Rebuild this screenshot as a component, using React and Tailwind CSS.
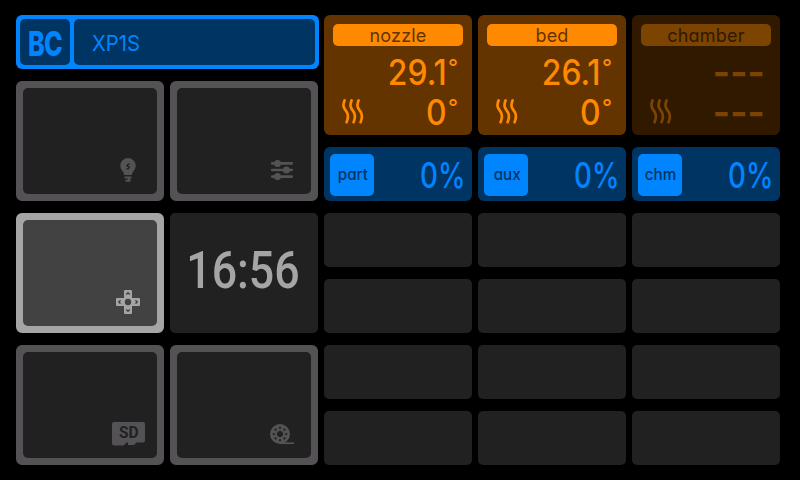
import React from "react";

function BulbIcon() {
  return (
    <svg width="34" height="24" viewBox="0 0 34 24" fill="#545254">
      <path d="M17 0a7.7 7.7 0 0 0-7.7 7.7c0 3 1.6 4.4 2.8 6.2.7 1 .9 1.900 1.100 3.100h7.600c.2-1.200.4-2.100 1.100-3.100 1.200-1.800 2.800-3.200 2.800-6.200A7.700 7.700 0 0 0 17 0z" />
      <path d="M13.500 18.600h7v1.800h-2v1h2l-1.400 2.100-2.100.5-2.100-.5-1.300-1.500h3v-1.400h-3z" />
      <path d="M18.600 5.800l-1.600.6-1 1.400 2.200 1.300-.8 1.500-1.800.2" fill="none" stroke="#212121" strokeWidth="1.400" />
    </svg>
  );
}

function SlidersIcon() {
  return (
    <svg width="34" height="24" viewBox="0 0 34 24" fill="#545254" stroke="#545254" strokeWidth="2.700" strokeLinecap="round">
      <path d="M7.200 5.400h19.600M7.200 12h19.600M7.200 18.600h19.600" />
      <g stroke="none">
        <circle cx="12.500" cy="5.400" r="3.500" />
        <circle cx="21.500" cy="12" r="3.500" />
        <circle cx="12.500" cy="18.600" r="3.500" />
      </g>
    </svg>
  );
}

function PadIcon() {
  return (
    <svg width="34" height="24" viewBox="0 0 34 24">
      <path d="M14 0h6a1 1 0 0 1 1 1v7h7a1 1 0 0 1 1 1v6a1 1 0 0 1-1 1h-7v7a1 1 0 0 1-1 1h-6a1 1 0 0 1-1-1v-7H6a1 1 0 0 1-1-1V9a1 1 0 0 1 1-1h7V1a1 1 0 0 1 1-1z" fill="#a5a5a5" />
      <circle cx="17" cy="12" r="3.200" fill="#424242" />
      <path d="M15.200 4.500L17 2.800l1.800 1.700M15.200 19.500l1.800 1.700 1.800-1.700M9.500 10.200L7.800 12l1.700 1.800M24.500 10.200l1.700 1.800-1.700 1.800" fill="none" stroke="#424242" strokeWidth="1.400" />
    </svg>
  );
}

function SdIcon() {
  return (
    <svg width="34" height="24" viewBox="0 0 34 24">
      <path d="M3 0h29a2 2 0 0 1 2 2v16.500a2 2 0 0 1-2 2h-6.500L23 23h-6v-2.400h-1.500L12.500 23.600H3a2 2 0 0 1-2-2V2a2 2 0 0 1 2-2z" fill="#545254" />
      <text x="8" y="16" fontFamily="Roboto, sans-serif" fontWeight="700" fontSize="16" textLength="19.500" lengthAdjust="spacingAndGlyphs" fill="#212121">SD</text>
    </svg>
  );
}

function SpoolIcon() {
  return (
    <svg width="34" height="24" viewBox="0 0 34 24">
      <circle cx="15" cy="12" r="10" fill="#545254" />
      <path d="M15 21.200h14" stroke="#545254" strokeWidth="1.700" />
      <circle cx="15" cy="12" r="3" fill="#212121" />
      <g fill="#212121">
        {[0, 45, 90, 135, 180, 225, 270, 315].map((a) => (
          <circle key={a} cx="15" cy="5.800" r="1.100" transform={`rotate(${a} 15 12)`} />
        ))}
      </g>
    </svg>
  );
}

function HeatIcon() {
  return (
    <svg width="22" height="25" viewBox="0 0 22 25" fill="none" stroke="currentColor" strokeWidth="2.700" strokeLinecap="round">
      <path d="M2.600 1.400C-.4 8 3.300 10.500 5 13.500c1.400 3 1.200 6-.4 9.700" />
      <path d="M9.600 1.400C6.600 8 10.300 10.500 12 13.500c1.400 3 1.200 6-.4 9.700" />
      <path d="M16.600 1.400C13.600 8 17.300 10.500 19 13.500c1.400 3 1.200 6-.4 9.700" />
    </svg>
  );
}

function Tile({ active, children }) {
  return (
    <div className={`row-span-2 flex items-end justify-end rounded-md border-[7px] ${active ? "border-[#a5a5a5] bg-[#a5a5a5]" : "border-[#545254] bg-[#545254]"}`}>
      <div className={`flex h-full w-full items-end justify-end rounded-[5px] p-3 ${active ? "bg-[#424242]" : "bg-[#212121]"}`}>{children}</div>
    </div>
  );
}

function Reading({ value }) {
  if (value === null) {
    return (
      <div className="flex h-10 items-center justify-end pr-[15px]">
        <span className="origin-right scale-x-[1.110] text-[33px] font-extrabold leading-10">---</span>
      </div>
    );
  }
  return (
    <div className="flex h-10 items-start justify-end pr-[14px]">
      <span className="origin-right scale-x-[0.910] text-[35px] font-medium leading-10">{value}</span>
      <span className="-mt-[3px] w-[11px] pl-px text-[22px] font-medium leading-9">°</span>
    </div>
  );
}

function Heater({ name, now, target, off }) {
  return (
    <div className={`row-span-2 rounded-md pt-[9px] ${off ? "bg-[#311900] text-[#7b4400]" : "bg-[#633400] text-[#ff8900]"}`}>
      <div className={`mx-[9px] flex h-[22px] items-center justify-center rounded-[5px] ${off ? "bg-[#7b4400] text-[#311900]" : "bg-[#ff8900] text-[#633400]"}`}>
        <span className="mt-[2px] text-[18px] leading-[22px] tracking-[0.200px]">{name}</span>
      </div>
      <div className="pt-[6px]">
        <Reading value={now} />
      </div>
      <div className="flex justify-between pl-[18px]">
        <div className="pt-[7px]">
          <HeatIcon />
        </div>
        <Reading value={target} />
      </div>
    </div>
  );
}

function Fan({ name }) {
  return (
    <div className="flex items-center justify-between rounded-md bg-[#003463] pl-[6px] pr-[7px] text-[#0085ff]">
      <div className="mt-[2px] flex h-[42px] w-11 items-center justify-center rounded-[5px] bg-[#0085ff] text-[#003463]">
        <span className="-mt-[2px] ml-[2px] scale-x-[0.950] text-[16px] font-medium leading-5">{name}</span>
      </div>
      <span className="mt-px origin-right scale-x-[0.790] text-[35px] font-medium leading-10">0%</span>
    </div>
  );
}

export default function App() {
  return (
    <div className="h-[480px] w-[800px] overflow-hidden bg-black pl-4 pt-[15px] font-[Inter,sans-serif] [font-feature-settings:'cv11']">
      <div className="grid w-[764px] grid-flow-col grid-cols-5 grid-rows-[repeat(7,54px)] gap-x-[6px] gap-y-3">
        <div className="col-span-2 col-start-1 row-start-1 -mr-px flex gap-1 rounded-md bg-[#0085ff] p-1 text-[#0085ff]">
          <div className="flex w-[50px] items-center justify-center rounded-[5px] bg-[#003463]">
            <span className="mt-[3px] scale-x-[0.740] text-[34px] font-extrabold leading-10 tracking-[-1px]">BC</span>
          </div>
          <div className="flex flex-1 items-center rounded-[5px] bg-[#003463] pl-[18px]">
            <span className="mt-px origin-left scale-x-[0.920] text-[22px] leading-6">XP1S</span>
          </div>
        </div>
        <Tile><BulbIcon /></Tile>
        <Tile active><PadIcon /></Tile>
        <Tile><SdIcon /></Tile>
        <Tile><SlidersIcon /></Tile>
        <div className="row-span-2 flex items-center justify-center rounded-[5px] bg-[#212121] text-[#a5a5a5]">
          <span className="-ml-[2px] -mt-[4px] scale-x-[0.860] font-[Roboto,sans-serif] text-[52px] font-medium leading-none">16:56</span>
        </div>
        <Tile><SpoolIcon /></Tile>
        <Heater name="nozzle" now="29.1" target="0" />
        <Fan name="part" />
        {[0, 1, 2, 3].map((i) => <div key={i} className="rounded-[5px] bg-[#212121]" />)}
        <Heater name="bed" now="26.1" target="0" />
        <Fan name="aux" />
        {[0, 1, 2, 3].map((i) => <div key={i} className="rounded-[5px] bg-[#212121]" />)}
        <Heater name="chamber" now={null} target={null} off />
        <Fan name="chm" />
        {[0, 1, 2, 3].map((i) => <div key={i} className="rounded-[5px] bg-[#212121]" />)}
      </div>
    </div>
  );
}
